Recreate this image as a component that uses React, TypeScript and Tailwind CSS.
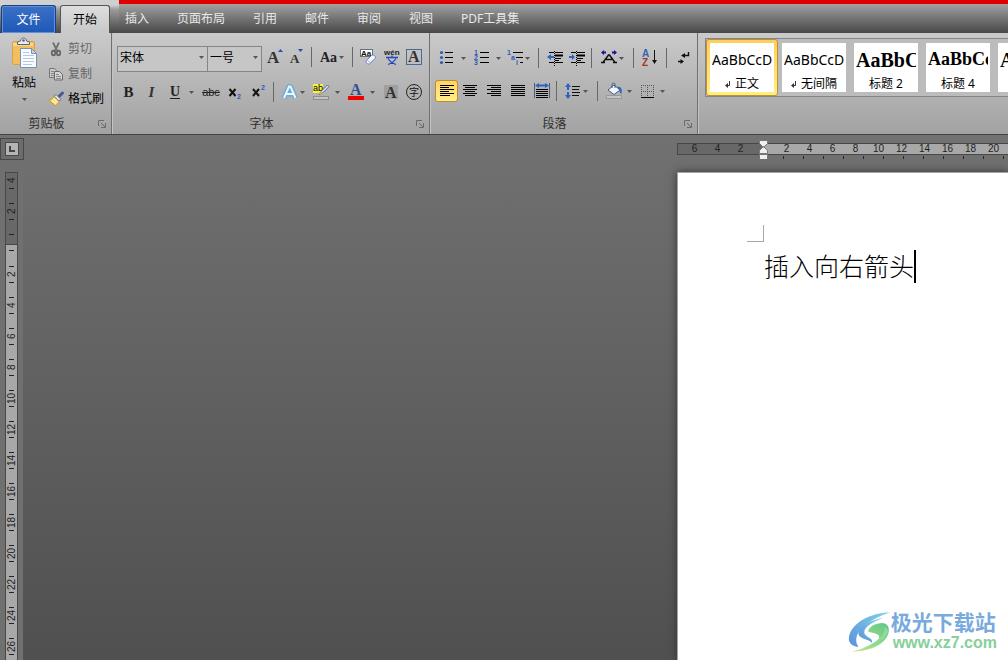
import type { ReactNode } from 'react'
import clsx from 'clsx'

const uiFont = "font-['Noto_Sans','Noto_Sans_CJK_SC',sans-serif]"

const tabs = ['插入', '页面布局', '引用', '邮件', '审阅', '视图', 'PDF工具集']

const styles = [
  { name: '正文', sample: 'AaBbCcD', font: "font-['Noto_Sans'] text-[14px]", mark: true, active: true },
  { name: '无间隔', sample: 'AaBbCcD', font: "font-['Noto_Sans'] text-[14px]", mark: true },
  { name: '标题 2', sample: 'AaBbC', font: "font-['Liberation_Serif'] font-bold text-[20px]" },
  { name: '标题 4', sample: 'AaBbCc', font: "font-['Liberation_Serif'] font-bold text-[18px]" },
  { name: '标题', sample: 'AaBbC', font: "font-['Liberation_Serif'] font-bold text-[20px]" },
]

const marginMarks = [6, 4, 2]
const rulerMarks = [2, 4, 6, 8, 10, 12, 14, 16, 18, 20, 22]
const verticalMarks = [2, 4, 6, 8, 10, 12, 14, 16, 18, 20, 22, 24, 26]

function Arrow() {
  return (
    <svg width="5" height="3" viewBox="0 0 5 3" className="shrink-0">
      <path d="M0 0h5L2.5 3z" fill="#555" />
    </svg>
  )
}

function Icon({ children }: { children: ReactNode }) {
  return (
    <svg width="16" height="16" viewBox="0 0 16 16" fill="none" className="shrink-0 overflow-visible">
      {children}
    </svg>
  )
}

function Tool({ label, className, children }: { label: string; className: string; children: ReactNode }) {
  return (
    <button
      type="button"
      aria-label={label}
      title={label}
      className={clsx('flex h-[22px] shrink-0 items-center', className)}
    >
      {children}
    </button>
  )
}

function Separator() {
  return <div className="mx-[3px] h-5 w-px shrink-0 bg-[#686868]" />
}

function Group({ title, className, children }: { title: string; className?: string; children: ReactNode }) {
  return (
    <section
      className={clsx(
        'flex shrink-0 flex-col border-r border-[#707070] shadow-[1px_0_0_#c4c4c4]',
        className
      )}
    >
      <div className="flex-1">{children}</div>
      <footer className="flex h-[21px] items-center">
        <h2 className="flex-1 text-center text-[12px] leading-4 text-[#303030]">{title}</h2>
        <Tool label={`${title}设置`} className="w-[18px] justify-center">
          <svg width="8" height="8" viewBox="0 0 8 8" fill="none" stroke="#6c6c6c">
            <path d="M.5 6V.5H6M3 3l4 4M7.5 3v4.5H3" />
          </svg>
        </Tool>
      </footer>
    </section>
  )
}

function Clipboard() {
  return (
    <Group title="剪贴板" className="w-28">
      <div className="flex pt-[3px] text-[12px] leading-4">
        <button type="button" className="flex w-12 flex-col items-center">
          <svg width="28" height="34" viewBox="0 0 28 34" fill="none">
            <rect x="2.5" y="5.5" width="22" height="23" rx="1.5" fill="#f1be60" stroke="#dba146" />
            <path d="M3 7h20v3H3z" fill="#f8d58c" />
            <path d="M7.5 8.500V6l3-1c0-4 6-4 6 0l3 1v2.500z" fill="#e9edf2" stroke="#5b6571" />
            <circle cx="13.5" cy="4.500" r="1.300" fill="#5b6571" />
            <path d="M10.500 12.500h11l5 5v14h-16z" fill="#f7faff" stroke="#7b91b3" />
            <path d="M21.500 12.500v5h5z" fill="#c8d7ec" stroke="#7b91b3" />
            <path d="M13 16.500h6M13 19.500h11M13 22.500h11M13 25.500h11M13 28.500h9" stroke="#b9c7dc" />
          </svg>
          <span className="mt-[5px]">粘贴</span>
          <span className="mt-[7px]">
            <Arrow />
          </span>
        </button>
        <div className="flex flex-col">
          <button type="button" className="flex h-[25px] items-center gap-1 text-[#666]">
            <Icon>
              <path d="M5 1.500L9 9.500M11 1.500L7 9.500" stroke="#707070" strokeWidth="1.800" />
              <ellipse cx="5.500" cy="12" rx="1.700" ry="2.400" stroke="#606060" strokeWidth="1.600" />
              <ellipse cx="10.500" cy="12" rx="1.700" ry="2.400" stroke="#606060" strokeWidth="1.600" />
            </Icon>
            剪切
          </button>
          <button type="button" className="flex h-[25px] items-center gap-1 text-[#666]">
            <Icon>
              <path d="M1.500 2.500h5l2 2v7h-7z" fill="#c9c9c9" stroke="#777" />
              <path d="M3 5.500h3M3 7.500h3M3 9.500h3" stroke="#888" />
              <path d="M6.500 5.500h5l3 3v5.500h-8z" fill="#d4d4d4" stroke="#6a6a6a" />
              <path d="M8 8.500h3M8 10.500h5M8 12.500h5" stroke="#888" />
            </Icon>
            复制
          </button>
          <button type="button" className="flex h-[25px] items-center gap-1">
            <Icon>
              <path d="M14.500 2L11 5.500" stroke="#4d5590" strokeWidth="3" strokeLinecap="round" />
              <path d="M8 3.500l5 5-2 1.500-5-5z" fill="#dfe3ee" stroke="#6a7190" />
              <path d="M6 5.500l5 5-3 4.500-7.500-6c3 0 4.500-1.500 5.500-3.500z" fill="#f7df72" stroke="#c09c3c" />
              <path d="M4 9.500l4 3M5.500 7.500l4 3.500" stroke="#fff9d0" />
            </Icon>
            格式刷
          </button>
        </div>
      </div>
    </Group>
  )
}

function Combo({ label, options, className }: { label: string; options: string[]; className: string }) {
  return (
    <div className={clsx('relative h-[26px] shrink-0', className)}>
      <select
        aria-label={label}
        className="size-full appearance-none border border-[#858585] bg-[#c6c6c6] pr-3 pb-0.5 pl-0.5 text-[12px] leading-4 text-black"
      >
        {options.map((option) => (
          <option key={option}>{option}</option>
        ))}
      </select>
      <span className="pointer-events-none absolute inset-y-0 right-1 flex items-center">
        <Arrow />
      </span>
    </div>
  )
}

function FontGroup() {
  const serif = "font-['Liberation_Serif'] font-bold text-[#222]"
  return (
    <Group title="字体" className="w-[318px]">
      <div className="mt-[11px] flex h-[26px] items-center pl-[5px]">
        <Combo label="字体" options={['宋体', '黑体', '楷体']} className="w-[91px]" />
        <Combo label="字号" options={['一号', '二号', '三号']} className="-ml-px w-[55px]" />
        <Tool label="增大字体" className="ml-0.5 w-[22px] justify-center">
          <Icon>
            <text x="0" y="14" className="font-['Liberation_Serif'] text-[17px] font-bold" fill="#333">A</text>
            <path d="M11 3h5l-2.500-3z" fill="#2450b0" />
          </Icon>
        </Tool>
        <Tool label="缩小字体" className="w-[22px] justify-center">
          <Icon>
            <text x="1" y="14" className="font-['Liberation_Serif'] text-[13px] font-bold" fill="#333">A</text>
            <path d="M9 0h5l-2.500 3z" fill="#2450b0" />
          </Icon>
        </Tool>
        <Separator />
        <Tool label="更改大小写" className="w-8 gap-0.5 pl-[5px]">
          <span className={clsx('text-[14px]', serif)}>Aa</span>
          <Arrow />
        </Tool>
        <span className="w-0.5" />
        <Separator />
        <Tool label="清除格式" className="w-6 justify-center">
          <Icon>
            <rect x=".5" y=".5" width="12" height="7" fill="#fff" stroke="#67717e" />
            <text x="1" y="7" className="font-['Liberation_Sans'] text-[8px] font-bold" fill="#111">Aa</text>
            <path d="M11.500 6.500c2-1.500 5 1 3.500 3l-5 5c-1.500 1.500-5-.5-3.500-3z" fill="#f4f7ff" stroke="#6b7fb4" />
            <path d="M7 10.500l4 4" stroke="#9fb1dc" />
          </Icon>
        </Tool>
        <Tool label="拼音指南" className="w-[23px] justify-center">
          <Icon>
            <text x="0" y="5.500" className="font-['Liberation_Sans'] text-[8px] font-bold" fill="#222">wén</text>
            <path d="M2 8.500h12M8 6.500v2M4 9.500c2 3 4.500 5 8 6M12 9.500c-2 3-4.500 5-8 6" stroke="#2545c0" strokeWidth="1.300" />
          </Icon>
        </Tool>
        <Tool label="字符边框" className="w-[22px] justify-center">
          <Icon>
            <rect x=".5" y=".5" width="15" height="15" stroke="#4b6a90" />
            <text x="2" y="13" className="font-['Liberation_Serif'] text-[16px] font-bold" fill="#333">A</text>
          </Icon>
        </Tool>
      </div>
      <div className="mt-[10px] flex h-6 items-center pl-[5px]">
        <Tool label="加粗" className={clsx('w-[23px] justify-center text-[15px]', serif)}>
          B
        </Tool>
        <Tool label="倾斜" className="w-[23px] justify-center font-['Liberation_Serif'] text-[15px] font-bold italic text-[#333]">
          I
        </Tool>
        <Tool label="下划线" className="w-9 gap-1.5 px-1">
          <span className={clsx('w-4 text-center text-[14px] leading-4 underline underline-offset-2', serif)}>U</span>
          <Arrow />
        </Tool>
        <Tool label="删除线" className="w-6 justify-center font-['Liberation_Sans'] text-[11px] text-[#222] line-through">
          abc
        </Tool>
        <Tool label="下标" className="w-6 justify-center">
          <Icon>
            <path d="M2.500 5l6 7M8.500 5l-6 7" stroke="#111" strokeWidth="2" />
            <text x="10" y="14.500" className="font-['Liberation_Sans'] text-[7px] font-bold" fill="#2a5bc8">2</text>
          </Icon>
        </Tool>
        <Tool label="上标" className="w-[23px] justify-center">
          <Icon>
            <path d="M2 5l6 7M8 5l-6 7" stroke="#111" strokeWidth="2" />
            <text x="10" y="6" className="font-['Liberation_Sans'] text-[7px] font-bold" fill="#2a5bc8">2</text>
          </Icon>
        </Tool>
        <Separator />
        <Tool label="文本效果" className="w-8 gap-0.5 pl-[5px]">
          <Icon>
            <path d="M2 14L7 2.500h1.500l5 11.500M4.500 10h6.500" stroke="#4fa8e4" strokeWidth="5" strokeLinejoin="round" opacity=".7" />
            <path d="M2 14L7 2.500h1.500l5 11.500M4.500 10h6.500" stroke="#eaf5ff" strokeWidth="2" />
          </Icon>
          <Arrow />
        </Tool>
        <Tool label="突出显示" className="w-[35px] gap-1.5 px-1">
          <Icon>
            <path d="M0 0h10v9H0z" fill="#f6f04a" />
            <text x="0" y="7" className="font-['Liberation_Sans'] text-[9px]" fill="#000">ab</text>
            <path d="M14.500 1L16 2.500 9.500 9 6 10.500l2-3z" fill="#e9eefa" stroke="#4d628f" />
            <path d="M5 10.500l3-3 2 2z" fill="#e2b62d" />
            <rect x=".5" y="12.500" width="15" height="3" fill="#c4c4c4" stroke="#8c8c8c" />
          </Icon>
          <Arrow />
        </Tool>
        <Tool label="字体颜色" className="w-[35px] gap-1.5 px-1">
          <Icon>
            <text x="2" y="11" className="font-['Liberation_Serif'] text-[16px] font-bold" fill="#2f4f91">A</text>
            <path d="M0 12h16v4H0z" fill="#f00000" />
          </Icon>
          <Arrow />
        </Tool>
        <Tool label="字符底纹" className="w-6 justify-center">
          <Icon>
            <path d="M1 1h14v14H1z" fill="#a0a0a0" />
            <text x="2" y="13.500" className="font-['Liberation_Serif'] text-[16px] font-bold" fill="#333">A</text>
          </Icon>
        </Tool>
        <Tool label="带圈字符" className="w-[22px] justify-center">
          <Icon>
            <circle cx="8" cy="8" r="7.500" stroke="#222" />
            <text x="3" y="12" className="font-['Noto_Sans_CJK_SC'] text-[10px]" fill="#111">字</text>
          </Icon>
        </Tool>
      </div>
    </Group>
  )
}

function ParagraphGroup() {
  return (
    <Group title="段落" className="w-[268px]">
      <div className="mt-3 flex h-[26px] items-center pl-[5px]">
        <Tool label="项目符号" className="w-[35px] gap-1.5 px-1">
          <Icon>
            <path d="M6 2.500h8M6 7.500h8M6 12.500h8" stroke="#000" />
            <g fill="#2f5ab4">
              <circle cx="2.500" cy="2.500" r="1.600" />
              <circle cx="2.500" cy="7.500" r="1.600" />
              <circle cx="2.500" cy="12.500" r="1.600" />
            </g>
          </Icon>
          <Arrow />
        </Tool>
        <Tool label="编号" className="w-[35px] gap-1.5 px-1">
          <Icon>
            <path d="M6 2.500h9M6 7.500h9M6 12.500h9" stroke="#000" />
            <g className="font-['Liberation_Sans'] text-[7px] font-bold" fill="#2f5ab4">
              <text x="0" y="5">1</text>
              <text x="0" y="10">2</text>
              <text x="0" y="15">3</text>
            </g>
          </Icon>
          <Arrow />
        </Tool>
        <Tool label="多级列表" className="w-[30px] gap-0.5 px-0.5">
          <Icon>
            <path d="M6 2.500h10M9 7.500h7M13 12.500h3" stroke="#000" />
            <g className="font-['Liberation_Sans'] text-[7px] font-bold" fill="#2f5ab4">
              <text x="0" y="5">1</text>
              <text x="4" y="10">a</text>
              <text x="9" y="15">i</text>
            </g>
          </Icon>
          <Arrow />
        </Tool>
        <Separator />
        <Tool label="减少缩进量" className="w-6 justify-end pr-[3px]">
          <Icon>
            <path d="M2 2.500h5M8 2.500h8M2 12.500h5M8 12.500h8M8 8.500h6M8 10.500h4" stroke="#000" />
            <path d="M8 5.500h8" stroke="#000" strokeWidth="2" />
            <path d="M7.500 1v15" stroke="#000" strokeDasharray="1 1" />
            <path d="M0 7l4-3v2h3v2H4v2z" fill="#2c62c6" />
          </Icon>
        </Tool>
        <Tool label="增加缩进量" className="w-[22px] justify-center">
          <Icon>
            <path d="M2 2.500h5M8 2.500h8M2 12.500h5M8 12.500h8M8 8.500h6M8 10.500h4" stroke="#000" />
            <path d="M8 5.500h8" stroke="#000" strokeWidth="2" />
            <path d="M7.500 1v15" stroke="#000" strokeDasharray="1 1" />
            <path d="M6 7L3 4v2H0v2h3v2z" fill="#2c62c6" />
          </Icon>
        </Tool>
        <Separator />
        <Tool label="中文版式" className="w-[35px] gap-0.5 pl-1.5">
          <Icon>
            <path d="M2 12.500L7.500 5h1l5.500 7.500M5 9.500h6M0 12.500h4M12 12.500h4" stroke="#111" strokeWidth="1.500" />
            <path d="M0 2.500L3 0v1.500h2v2H3V5zM16 2.500L13 0v1.500h-2v2h2V5z" fill="#16169a" />
          </Icon>
          <Arrow />
        </Tool>
        <Separator />
        <Tool label="排序" className="w-[26px] justify-center">
          <Icon>
            <text x="0" y="7" className="font-['Liberation_Sans'] text-[10px] font-bold" fill="#3660b4">A</text>
            <text x="0" y="15.500" className="font-['Liberation_Sans'] text-[10px] font-bold" fill="#a83232">Z</text>
            <path d="M12.500 0v12" stroke="#111" />
            <path d="M10 10h5l-2.500 4z" fill="#111" />
          </Icon>
        </Tool>
        <Separator />
        <Tool label="显示编辑标记" className="w-[26px] justify-center">
          <Icon>
            <path d="M13.500 2v3.500H9M3 11.500h4" stroke="#111" strokeWidth="1.400" />
            <path d="M6 5.500L10 3v5zM9 11.500L5.500 9v5z" fill="#111" />
          </Icon>
        </Tool>
      </div>
      <div className="mt-2 flex h-6 items-center pl-[5px]">
        <Tool
          label="左对齐"
          className="w-[23px] justify-center rounded-[3px] border border-[#c18a2c] bg-linear-to-b from-[#ffd564] to-[#fff08a]"
        >
          <Icon>
            <path d="M1 2.500h14M1 4.500h9M1 6.500h14M1 8.500h9M1 10.500h14M1 12.500h10" stroke="#000" />
          </Icon>
        </Tool>
        <Tool label="居中" className="w-6 justify-center">
          <Icon>
            <path d="M1 2.500h14M3 4.500h10M1 6.500h14M3 8.500h10M1 10.500h14M3 12.500h10" stroke="#000" />
          </Icon>
        </Tool>
        <Tool label="右对齐" className="w-6 justify-center">
          <Icon>
            <path d="M1 2.500h14M5 4.500h10M1 6.500h14M5 8.500h10M1 10.500h14M5 12.500h10" stroke="#000" />
          </Icon>
        </Tool>
        <Tool label="两端对齐" className="w-6 justify-center">
          <Icon>
            <path d="M1 2.500h14M1 4.500h14M1 6.500h14M1 8.500h14M1 10.500h14M1 12.500h14" stroke="#000" />
          </Icon>
        </Tool>
        <Tool label="分散对齐" className="w-[23px] justify-center">
          <Icon>
            <path d="M.5 0v15M15.500 0v15" stroke="#4d5c77" />
            <path d="M1 2.500L5 0v1.500h6V0l4 2.500L11 5V3.500H5V5z" fill="#2c62c6" />
            <path d="M2 6.500h12M2 8.500h12M2 10.500h12M2 12.500h12M2 14.500h12" stroke="#000" />
          </Icon>
        </Tool>
        <Separator />
        <Tool label="行距" className="w-[34px] gap-0.5 pl-[5px]">
          <Icon>
            <path d="M3 0l3 4H4v3H2V4H0zM3 16l3-4H4V9H2v3H0z" fill="#2c62c6" />
            <path d="M7 3.500h8M7 6.500h7M7 9.500h8M7 12.500h7" stroke="#111" />
          </Icon>
          <Arrow />
        </Tool>
        <Separator />
        <Tool label="底纹" className="w-[35px] gap-[5px] pl-[5px]">
          <Icon>
            <path d="M2 7l6-5 6 5-6 4.500z" fill="#f2f6ff" stroke="#475d86" />
            <path d="M6 5V1.500C6-.5 9-.5 9 1.500V5" stroke="#475d86" />
            <path d="M11 4c4-1 5.500 2 4.500 7-1.500-1-2-2-2-4z" fill="#2d65c5" />
            <rect x=".5" y="12.500" width="15" height="3" fill="#c4c4c4" stroke="#999" />
          </Icon>
          <Arrow />
        </Tool>
        <Tool label="边框" className="w-8 gap-1 pl-1">
          <Icon>
            <path d="M1.500 2v12M7.500 2v12M13.500 2v12M1 2.500h13M1 8.500h13" stroke="#555" strokeDasharray="1 1" />
            <path d="M1 14.500h13" stroke="#000" />
          </Icon>
          <Arrow />
        </Tool>
      </div>
    </Group>
  )
}

function StyleGallery() {
  return (
    <section className="min-w-0 flex-1 overflow-hidden pt-[5px] pl-[7px]">
      <div className="flex border border-r-0 border-[#858585] bg-[#bcbcbc]">
        {styles.map((style) => (
          <button
            key={style.name}
            type="button"
            className={clsx(
              'h-[57px] w-[72px] shrink-0 rounded-[3px] border p-[3px]',
              style.active ? 'border-[#c08f3c] bg-linear-to-b from-[#ffce5c] to-[#fff07e]' : 'border-transparent'
            )}
          >
            <span className="flex h-full flex-col overflow-hidden bg-white px-0.5 text-black">
              <span className={clsx('flex h-[33px] items-center overflow-hidden whitespace-nowrap', style.font)}>
                {style.sample}
              </span>
              <span className="flex h-4 items-center justify-center gap-1 text-[12px] leading-4 whitespace-nowrap">
                {style.mark && (
                  <svg width="6" height="7" viewBox="0 0 6 7" fill="none">
                    <path d="M4.500 0v4.500H2" stroke="#333" />
                    <path d="M0 4.500L3 2v5z" fill="#333" />
                  </svg>
                )}
                {style.name}
              </span>
            </span>
          </button>
        ))}
      </div>
    </section>
  )
}

function HorizontalRuler() {
  return (
    <div className="relative ml-[653px] min-w-0 flex-1 overflow-hidden pt-[5px]">
      <div className="flex h-3 font-['Liberation_Sans'] text-[10px] leading-[10px] text-[#222]">
        <div className="flex w-[87px] shrink-0 border border-r-0 border-[#484848] bg-[#686868] pl-[5px]">
          {marginMarks.map((n) => (
            <span key={n} className="w-[23px] text-center">
              {n}
            </span>
          ))}
        </div>
        <div className="flex min-w-0 flex-1 overflow-hidden border-y border-[#484848] bg-[#a8a8a8] pl-[11px]">
          {rulerMarks.map((n) => (
            <span key={n} className="w-[23px] shrink-0 text-center">
              {n}
            </span>
          ))}
        </div>
      </div>
      <div className="mt-px flex overflow-hidden pl-[87px]">
        {rulerMarks.concat(24).map((n) => (
          <span key={n} className="h-[3px] w-5 shrink-0 border-r border-[#2a2a2a]" />
        ))}
      </div>
      <svg width="9" height="20" viewBox="0 0 9 20" className="absolute top-0.5 left-[82px]" fill="#f0f0f0" stroke="#777">
        <path d="M.5 .5h8v3l-3.500 3.500h-1L.5 3.500z" />
        <path d="M4 7h1l3.500 3.500v3h-8v-3z" />
        <path d="M.5 14.500h8v5h-8z" />
      </svg>
    </div>
  )
}

function Tick() {
  return <span className="h-px w-[5px] bg-[#222]" />
}

function VerticalMark({ value }: { value: number }) {
  return (
    <div className="flex h-[31px] shrink-0 flex-col items-center justify-center">
      <Tick />
      <span className="flex h-[15px] rotate-180 items-center justify-center leading-[10px] [writing-mode:vertical-rl]">
        {value}
      </span>
      <Tick />
    </div>
  )
}

function VerticalRuler() {
  return (
    <div className="h-full w-[13px] border-x border-t border-[#484848] font-['Liberation_Sans'] text-[10px] text-[#222]">
      <div className="flex h-[72px] flex-col overflow-hidden border-b border-[#484848] bg-[#686868]">
        <div className="-mt-2 flex flex-col">
          <VerticalMark value={4} />
          <VerticalMark value={2} />
        </div>
        <div className="mt-[7px] flex justify-center">
          <Tick />
        </div>
      </div>
      <div className="flex h-[calc(100%-72px)] flex-col overflow-hidden bg-[#a8a8a8]">
        <div className="flex h-[14px] shrink-0 items-start justify-center pt-[5px]">
          <Tick />
        </div>
        {verticalMarks.map((n) => (
          <VerticalMark key={n} value={n} />
        ))}
      </div>
    </div>
  )
}

function Watermark() {
  return (
    <a href="#" className="absolute right-[11px] bottom-[7px] flex items-center">
      <svg width="43" height="43" viewBox="0 0 45 44" fill="none">
        <defs>
          <linearGradient id="swirl-blue" x1="0" y1="1" x2="1" y2="0">
            <stop offset="0" stopColor="#5c91dc" />
            <stop offset="1" stopColor="#7fd4e4" />
          </linearGradient>
          <linearGradient id="swirl-green" x1="0" y1="1" x2="1" y2="0">
            <stop offset="0" stopColor="#c8e67a" />
            <stop offset="1" stopColor="#5cc78c" />
          </linearGradient>
        </defs>
        <path d="M44 2C24 2 3 13 1 28c-1 6 4 10 10 10C6 32 9 22 18 15 26 9 34 5 44 2z" fill="url(#swirl-blue)" />
        <path d="M37 8C22 10 10 18 11 25c1 5 11 5 14 9 2-6-8-6-8-11 0-6 9-11 20-15z" fill="url(#swirl-blue)" />
        <path d="M31 14c8-3 14 2 11 11C38 37 20 43 4 43c12-3 24-7 28-13 3-6-5-6-11-8 1-4 5-7 10-8z" fill="url(#swirl-green)" />
        <path d="M38 17c2 8-8 17-24 23 12-3 26-9 28-18 0-2-2-4-4-5z" fill="#8adc9c" />
      </svg>
      <span className="flex flex-col">
        <span className="font-['Noto_Sans_CJK_SC'] text-[21px] leading-6 font-bold text-[#78aadd]">极光下载站</span>
        <span className="pl-0.5 font-['Liberation_Sans'] text-[16px] leading-5 font-bold text-[#85d09b]">
          www.xz7.com
        </span>
      </span>
    </a>
  )
}

export default function App() {
  return (
    <div className={clsx('relative flex min-h-screen flex-col overflow-hidden bg-[#707070] text-black', uiFont)}>
      <nav className="flex h-[33px] bg-linear-to-b from-[#b0b0b0] to-[#484848] text-[12px] leading-4">
        <div className="flex w-[119px] shrink-0 bg-linear-to-b from-[#d0d0d0] from-15% via-[#999] via-30% to-[#484848] pt-[5px] pl-px">
          <button
            type="button"
            className="w-[55px] rounded-t-[3px] border border-b-0 border-[#173f88] bg-linear-to-b from-[#3b70c4] to-[#1d57b8] text-white shadow-[inset_0_0_0_1px_#5f8fdb]"
          >
            文件
          </button>
          <button
            type="button"
            className="ml-1 w-[50px] rounded-t-[3px] border border-b-0 border-[#555] bg-linear-to-b from-[#dedede] to-[#c8c8c8]"
          >
            开始
          </button>
        </div>
        <div className="-ml-2 flex min-w-0 flex-1 pt-[5px]">
          {tabs.map((tab) => (
            <button key={tab} type="button" className="shrink-0 px-3.5 text-[#e8e8e8]">
              {tab}
            </button>
          ))}
        </div>
        <div className="absolute top-0 right-0 left-[119px] h-1 bg-[#e00000]" />
      </nav>

      <header className="flex h-[102px] border-b border-[#444] bg-linear-to-b from-[#cacaca] to-[#a2a2a2]">
        <Clipboard />
        <FontGroup />
        <ParagraphGroup />
        <StyleGallery />
      </header>

      <main className="flex flex-1 flex-col bg-linear-to-b from-[#717171] to-[#505050]">
        <div className="flex h-[37px] items-start pt-[3px]">
          <button
            type="button"
            aria-label="制表符"
            className="flex h-[22px] w-6 shrink-0 items-center justify-center border border-[#484848] bg-[#6c6c6c]"
          >
            <span className="flex size-[14px] items-center justify-center border border-[#484848] bg-[#b4b4b4]">
              <svg width="6" height="6" viewBox="0 0 6 6" fill="none">
                <path d="M1 0v5h5" stroke="#444" strokeWidth="2" />
              </svg>
            </span>
          </button>
          <HorizontalRuler />
        </div>
        <div className="flex flex-1">
          <div className="relative w-[23px] shrink-0 bg-[#707070]">
            <div className="absolute inset-y-0 left-[5px]">
              <VerticalRuler />
            </div>
          </div>
          <div className="flex min-w-0 flex-1 pl-[654px]">
            <article className="min-h-[488px] flex-1 border-t border-l border-[#a0a4b0] bg-white pt-[52px] pl-[69px] shadow-[0_0_8px_#333]">
              <div className="size-[17px] border-r border-b border-[#a8a8a8]" />
              <p className="mt-2 ml-[17px] flex h-[33px] items-center text-[25px] font-light whitespace-nowrap">
                插入向右箭头
                <span className="h-[33px] w-0.5 bg-black" />
              </p>
            </article>
          </div>
        </div>
      </main>
      <Watermark />
    </div>
  )
}
